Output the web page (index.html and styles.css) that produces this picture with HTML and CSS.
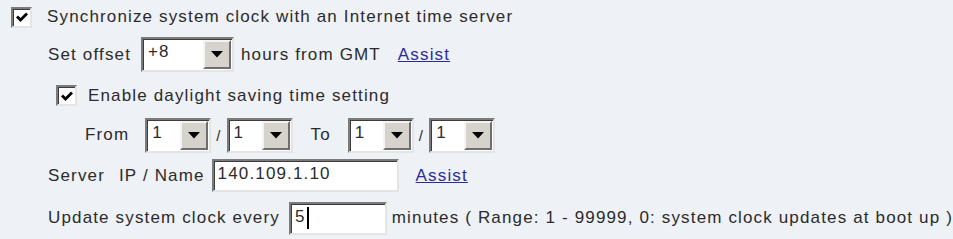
FILE: index.html
```html
<!DOCTYPE html>
<html lang="en">
<head>
  <meta charset="UTF-8" />
  <title>Time settings</title>
  <link rel="stylesheet" href="styles.css">
</head>
<body>
<div id="timeform">
  <div class="row row-sync">
    <span class="check"><svg viewBox="0 0 14 14" width="14" height="14"><path d="M2 6.5 L5.5 10 L12 3.5" fill="none" stroke="#000" stroke-width="2.8"/></svg></span>
    <span class="label gap-check">Synchronize system clock with an Internet time server</span>
  </div>

  <div class="row row-offset">
    <span class="label">Set offset</span>
    <span class="select sel-offset"><span class="val">+8</span><span class="btn"><svg viewBox="0 0 12 7" width="12" height="7"><path d="M0 0 H12 L6 6.5 Z" fill="#000"/></svg></span></span>
    <span class="label">hours from GMT</span>
    <a class="assist" href="#">Assist</a>
  </div>

  <div class="row row-dst">
    <span class="check"><svg viewBox="0 0 14 14" width="14" height="14"><path d="M2 6.5 L5.5 10 L12 3.5" fill="none" stroke="#000" stroke-width="2.8"/></svg></span>
    <span class="label gap-check2">Enable daylight saving time setting</span>
  </div>

  <div class="row row-range">
    <span class="label from">From</span>
    <span class="select sel-small"><span class="val">1</span><span class="btn"><svg viewBox="0 0 12 7" width="12" height="7"><path d="M0 0 H12 L6 6.5 Z" fill="#000"/></svg></span></span>
    <span class="slash">/</span>
    <span class="select sel-small"><span class="val">1</span><span class="btn"><svg viewBox="0 0 12 7" width="12" height="7"><path d="M0 0 H12 L6 6.5 Z" fill="#000"/></svg></span></span>
    <span class="label to">To</span>
    <span class="select sel-small"><span class="val">1</span><span class="btn"><svg viewBox="0 0 12 7" width="12" height="7"><path d="M0 0 H12 L6 6.5 Z" fill="#000"/></svg></span></span>
    <span class="slash">/</span>
    <span class="select sel-small"><span class="val">1</span><span class="btn"><svg viewBox="0 0 12 7" width="12" height="7"><path d="M0 0 H12 L6 6.5 Z" fill="#000"/></svg></span></span>
  </div>

  <div class="row row-server">
    <span class="label">Server</span>
    <span class="label ipname">IP / Name</span>
    <span class="field field-server">140.109.1.10</span>
    <a class="assist" href="#">Assist</a>
  </div>

  <div class="row row-update">
    <span class="label">Update system clock every</span>
    <span class="field field-min">5<span class="caret"></span></span>
    <span class="label">minutes ( Range: 1 - 99999, 0: system clock updates at boot up )</span>
  </div>
</div>
</body>
</html>
```

FILE: styles.css
```css
html, body {
  margin: 0;
  padding: 0;
  background: #eef1f6;
  color: #2b2b2b;
  font-family: "Liberation Sans", Arial, sans-serif;
  font-size: 17px;
  letter-spacing: 1.15px;
}

#timeform {
  width: 953px;
  height: 239px;
}

.row {
  display: flex;
  align-items: center;
  white-space: nowrap;
}

.row-sync   { height: 34px; padding-left: 11px; }
.row-offset { height: 41px; padding-left: 48px; }
.row-dst    { height: 41px; padding-left: 56px; }
.row-range  { height: 38px; padding-left: 85px; }
.row-server { height: 43px; padding-left: 48px; }
.row-update { height: 42px; padding-left: 48px; }

.check {
  width: 17px;
  height: 17px;
  background: #fff;
  border: 2px solid;
  border-color: #7b7b7b #e4e4e4 #e4e4e4 #7b7b7b;
  box-shadow: inset 1px 1px 0 #3c3c3c;
  display: flex;
  align-items: center;
  justify-content: center;
}

.gap-check  { margin-left: 15px; }
.gap-check2 { margin-left: 11px; }

.select {
  display: flex;
  height: 29px;
  background: #fff;
  border: 2px solid;
  border-color: #7b7b7b #e4e4e4 #e4e4e4 #7b7b7b;
  box-shadow: inset 1px 1px 0 #3c3c3c;
  padding: 1px 1px 1px 2px;
}

.select .val {
  flex: 1;
  line-height: 24px;
  padding-left: 3px;
}

.select .btn {
  width: 24px;
  background: #d6d3cc;
  border: 2px solid;
  border-color: #f4f4f4 #6e6e6e #6e6e6e #f4f4f4;
  display: flex;
  align-items: center;
  justify-content: center;
}

.sel-offset { width: 86px; margin: 0 7px 0 10px; }
.sel-small  { width: 59px; }

.from  { margin-right: 16px; }
.to    { margin: 0 17px 0 18px; }
.slash { margin: 0 5px 0 5px; font-size: 15px; }

.assist {
  color: #2b2b9c;
  margin-left: 17px;
}

.ipname { margin-left: 14px; margin-right: 7px; }

.field {
  height: 29px;
  background: #fff;
  border: 2px solid;
  border-color: #7b7b7b #e4e4e4 #e4e4e4 #7b7b7b;
  box-shadow: inset 1px 1px 0 #3c3c3c;
  padding-left: 4px;
  line-height: 26px;
  display: flex;
  align-items: flex-start;
}

.field-server { width: 179px; }
.field-min    { width: 91px; margin: 0 5px 0 9px; }

.caret {
  display: inline-block;
  width: 2px;
  height: 22px;
  margin-top: 3px;
  margin-left: 1px;
  background: #000;
}
```
